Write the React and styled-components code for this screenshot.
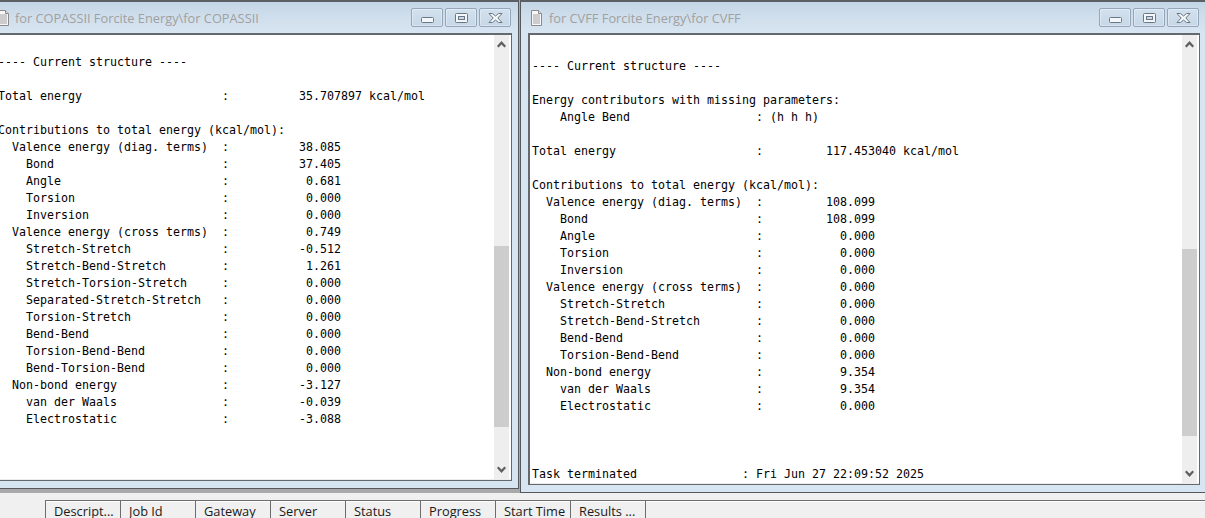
import styled, { createGlobalStyle } from 'styled-components'

const GlobalStyle = createGlobalStyle`
  html, body {
    margin: 0;
    padding: 0;
    width: 1205px;
    height: 518px;
    overflow: hidden;
    background: #f0f0f0;
  }
`

const Page = styled.div`
  display: flex;
  flex-direction: column;
  width: 1205px;
  height: 518px;
  overflow: hidden;
`

const MdiArea = styled.div`
  display: flex;
  align-items: flex-start;
  height: 493px;
  flex: none;
  background: #a9a9a9;
  gap: 1px;
`

const Window = styled.div`
  box-sizing: border-box;
  flex: none;
  display: flex;
  flex-direction: column;
  width: ${(props) => props.$width}px;
  height: ${(props) => props.$height}px;
  margin-left: ${(props) => props.$offset || 0}px;
  background: #d7e4f2;
  border-top: 2px solid #5c5f63;
  border-right: ${(props) => (props.$open ? 'none' : '1px solid #55585c')};
  border-left: 1px solid #55585c;
  border-bottom: 1px solid #55585c;
  overflow: hidden;
`

const TitleBar = styled.div`
  flex: none;
  height: 31px;
  display: flex;
  align-items: center;
  padding: 0 ${(props) => props.$right}px 0 10px;
  background: linear-gradient(180deg, #c3d5e6 0%, #cfdeec 45%, #d8e5f2 100%);
`

const TitleText = styled.span`
  flex: 1;
  margin-left: ${(props) => props.$gap}px;
  font: 12.8px 'Open Sans', 'Liberation Sans', sans-serif;
  color: #a0a0a0;
  white-space: nowrap;
`

const Buttons = styled.div`
  display: flex;
  gap: 2px;
`

const WinButton = styled.div`
  box-sizing: border-box;
  width: 32px;
  height: 19px;
  display: flex;
  align-items: center;
  justify-content: center;
  border: 1px solid #93a6ba;
  border-radius: 2px;
  background: linear-gradient(180deg, #d3e1ee 0%, #c6d7e7 100%);
  box-shadow: inset 0 0 0 1px rgba(255, 255, 255, 0.35);
`

const ClientRow = styled.div`
  flex: 1;
  min-height: 0;
  margin: 0 ${(props) => props.$right}px 7px ${(props) => props.$left}px;
  display: flex;
  background: #fff;
  border: 2px solid #65686c;
  border-bottom-width: 1px;
  border-right-width: 1px;
  box-shadow: inset 0 -1px 0 #ececec;
`

const Output = styled.pre`
  flex: 1;
  margin: 0;
  padding: ${(props) => props.$top}px 0 0 ${(props) => props.$left}px;
  font: 11.63px/17px 'DejaVu Sans Mono', 'Liberation Mono', monospace;
  color: #000;
  overflow: hidden;
`

const Scrollbar = styled.div`
  position: relative;
  flex: none;
  width: 15px;
  margin: 0 2px 1px 0;
  background: #eeeeee;
`

const Thumb = styled.div`
  position: absolute;
  left: 0;
  right: 0;
  top: ${(props) => props.$top}px;
  height: ${(props) => props.$height}px;
  background: #cdcdcd;
`

const Arrow = styled.svg`
  position: absolute;
  left: 3px;
  width: 9px;
  height: 7px;
  ${(props) => (props.$down ? 'bottom: 6px;' : 'top: 6px;')}
`

const ListHeader = styled.div`
  flex: 1;
  display: flex;
  margin-top: 7px;
  padding-left: 45px;
`

const HeaderRow = styled.div`
  flex: 1;
  display: flex;
  border-top: 1px solid #6d6d6d;
  border-left: 1px solid #6d6d6d;
  box-shadow: inset 0 1px 0 #fff;
  background: #f0f0f0;
`

const HeaderCell = styled.div`
  box-sizing: border-box;
  flex: none;
  width: 75px;
  padding: 2px 0 0 8px;
  border-right: 1px solid #6d6d6d;
  font: 12.8px/17px 'Open Sans', 'Liberation Sans', sans-serif;
  color: #1a1a1a;
  white-space: nowrap;
`

const copassLog = `
---- Current structure ----

Total energy                    :          35.707897 kcal/mol

Contributions to total energy (kcal/mol):
  Valence energy (diag. terms)  :          38.085
    Bond                        :          37.405
    Angle                       :           0.681
    Torsion                     :           0.000
    Inversion                   :           0.000
  Valence energy (cross terms)  :           0.749
    Stretch-Stretch             :          -0.512
    Stretch-Bend-Stretch        :           1.261
    Stretch-Torsion-Stretch     :           0.000
    Separated-Stretch-Stretch   :           0.000
    Torsion-Stretch             :           0.000
    Bend-Bend                   :           0.000
    Torsion-Bend-Bend           :           0.000
    Bend-Torsion-Bend           :           0.000
  Non-bond energy               :          -3.127
    van der Waals               :          -0.039
    Electrostatic               :          -3.088`

const cvffLog = `
---- Current structure ----

Energy contributors with missing parameters:
    Angle Bend                  : (h h h)

Total energy                    :         117.453040 kcal/mol

Contributions to total energy (kcal/mol):
  Valence energy (diag. terms)  :         108.099
    Bond                        :         108.099
    Angle                       :           0.000
    Torsion                     :           0.000
    Inversion                   :           0.000
  Valence energy (cross terms)  :           0.000
    Stretch-Stretch             :           0.000
    Stretch-Bend-Stretch        :           0.000
    Bend-Bend                   :           0.000
    Torsion-Bend-Bend           :           0.000
  Non-bond energy               :           9.354
    van der Waals               :           9.354
    Electrostatic               :           0.000



Task terminated               : Fri Jun 27 22:09:52 2025`

const columns = ['Descript...', 'Job Id', 'Gateway', 'Server', 'Status', 'Progress', 'Start Time', 'Results ...']

function DocIcon() {
  return (
    <svg width="11" height="16" viewBox="0 0 11 16" style={{ flex: 'none' }}>
      <path d="M.5.5h7l3 3v12H.5z" fill="#f7f7f7" stroke="#8b8b8b" />
      <path d="M7.5.5v3h3" fill="#ddd" stroke="#8b8b8b" />
      <path d="M2 5h7M2 7h7M2 9h7M2 11h7M2 13h7" stroke="#a2a2a2" />
    </svg>
  )
}

function WindowButtons() {
  return (
    <Buttons>
      <WinButton>
        <svg width="13" height="6" viewBox="0 0 13 6" style={{ marginTop: 5 }}>
          <rect x=".5" y=".5" width="12" height="5" rx="1" fill="#f4f7fa" stroke="#6b7684" />
        </svg>
      </WinButton>
      <WinButton>
        <svg width="13" height="10" viewBox="0 0 13 10">
          <rect x=".5" y=".5" width="12" height="9" rx="1" fill="#f4f7fa" stroke="#6b7684" />
          <rect x="3.500" y="3.500" width="6" height="3" fill="#c9d8e7" stroke="#6b7684" />
        </svg>
      </WinButton>
      <WinButton>
        <svg width="15" height="10" viewBox="0 0 15 10">
          <path d="M1 .5h3.500l3 2.500 3-2.500H14L9.800 5 14 9.500h-3.500L7.500 7l-3 2.500H1L5.200 5z" fill="#f4f7fa" stroke="#6b7684" />
        </svg>
      </WinButton>
    </Buttons>
  )
}

function ScrollArrows() {
  return (
    <>
      <Arrow viewBox="0 0 9 7">
        <path d="M0 5l4.500-5L9 5 7.500 6.500 4.500 3.500 1.500 6.500z" fill="#5f5f5f" />
      </Arrow>
      <Arrow $down viewBox="0 0 9 7">
        <path d="M0 2l4.500 5L9 2 7.500.5 4.500 3.500 1.500.5z" fill="#5f5f5f" />
      </Arrow>
    </>
  )
}

export default function App() {
  return (
    <Page>
      <GlobalStyle />
      <MdiArea>
        <Window $width={532} $height={489} $offset={-13}>
          <TitleBar $right={7}>
            <DocIcon />
            <TitleText $gap={6}>for COPASSII Forcite Energy\for COPASSII</TitleText>
            <WindowButtons />
          </TitleBar>
          <ClientRow $left={8} $right={6}>
            <Output $left={0} $top={2}>{copassLog}</Output>
            <Scrollbar>
              <Thumb $top={211} $height={181} />
              <ScrollArrows />
            </Scrollbar>
          </ClientRow>
        </Window>
        <Window $width={685} $height={493} $open>
          <TitleBar $right={6}>
            <DocIcon />
            <TitleText $gap={7}>for CVFF Forcite Energy\for CVFF</TitleText>
            <WindowButtons />
          </TitleBar>
          <ClientRow $left={7} $right={5}>
            <Output $left={2} $top={6}>{cvffLog}</Output>
            <Scrollbar>
              <Thumb $top={214} $height={187} />
              <ScrollArrows />
            </Scrollbar>
          </ClientRow>
        </Window>
      </MdiArea>
      <ListHeader>
        <HeaderRow>
          {columns.map((name) => (
            <HeaderCell key={name}>{name}</HeaderCell>
          ))}
        </HeaderRow>
      </ListHeader>
    </Page>
  )
}
